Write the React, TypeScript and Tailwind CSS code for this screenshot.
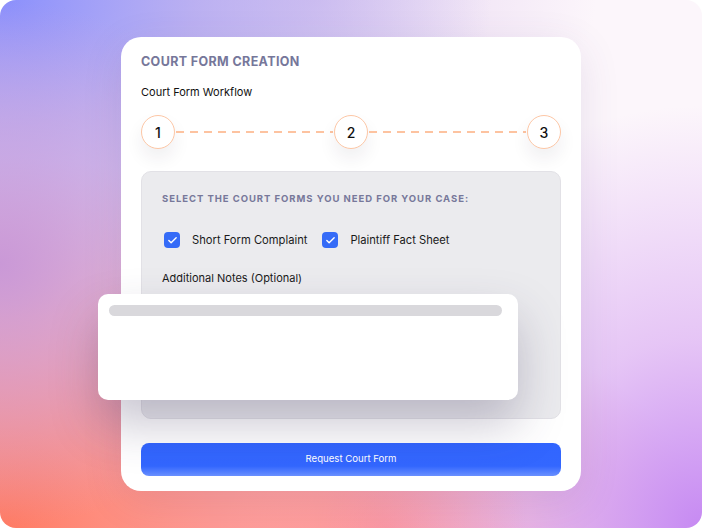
import { Check } from "lucide-react";

function Step({ n }: { n: number }) {
  return (
    <div className="w-[34px] h-[34px] shrink-0 rounded-full border border-[#fdc7a6] bg-white flex items-center justify-center text-[14px] font-medium text-[#111] shadow-[0_10px_18px_rgba(40,30,60,0.07)]">
      {n}
    </div>
  );
}

function Dashes() {
  return (
    <div className="flex-1 h-[2px] mx-[1px] bg-[repeating-linear-gradient(90deg,#fdc3a0_0_8px,transparent_8px_14px)]" />
  );
}

function CheckItem({ label }: { label: string }) {
  return (
    <label className="flex items-center gap-[12px]">
      <span className="w-[16px] h-[16px] rounded-[4px] bg-[#356bf7] flex items-center justify-center">
        <Check size={11} strokeWidth={3} className="text-white" />
      </span>
      <span className="text-[11.2px] text-[#1a1a1a]">{label}</span>
    </label>
  );
}

export default function App() {
  return (
    <div className="w-[702px] h-[528px] bg-white font-['Inter',sans-serif]">
      <div className="w-full h-full rounded-[16px] flex items-center justify-center bg-[radial-gradient(ellipse_40%_50%_at_0%_50%,rgba(200,150,215,0.95)_0%,transparent_100%),radial-gradient(ellipse_70%_60%_at_0%_0%,#8a8ffc_0%,rgba(165,155,240,0.7)_40%,transparent_100%),radial-gradient(ellipse_75%_70%_at_0%_100%,#ff7a62_0%,rgba(255,135,125,0.75)_40%,transparent_100%),radial-gradient(ellipse_55%_80%_at_100%_100%,#c689f2_0%,rgba(215,165,242,0.6)_45%,transparent_100%),radial-gradient(ellipse_45%_40%_at_55%_100%,#ffa0aa_0%,transparent_100%),radial-gradient(ellipse_40%_30%_at_45%_0%,#e6d3f0_0%,transparent_100%),linear-gradient(#fcf6fb,#fcf6fb)]">
        <div className="w-[460px] h-[454px] bg-white rounded-[20px] px-[20px] pt-[17px] pb-[15px] flex flex-col shadow-[0_10px_40px_rgba(80,60,120,0.12)]">
          <h1 className="text-[12.5px] leading-[16px] font-bold tracking-[0.03em] text-[#76779a]">
            COURT FORM CREATION
          </h1>
          <p className="mt-[14px] text-[11px] leading-[16px] text-[#111]">Court Form Workflow</p>

          <div className="mt-[15px] flex items-center">
            <Step n={1} />
            <Dashes />
            <Step n={2} />
            <Dashes />
            <Step n={3} />
          </div>

          <div className="relative mt-[22px] h-[249px] rounded-[10px] border border-[#e2e1e6] bg-[#ebebee] px-[20px] pt-[20px]">
            <h2 className="text-[9.5px] leading-[14px] font-bold tracking-[0.1em] text-[#77789a]">
              SELECT THE COURT FORMS YOU NEED FOR YOUR CASE:
            </h2>
            <div className="mt-[26px] flex items-center gap-[15px] pl-[2px]">
              <CheckItem label="Short Form Complaint" />
              <CheckItem label="Plaintiff Fact Sheet" />
            </div>
            <p className="mt-[21px] text-[11px] leading-[16px] text-[#1a1a1a]">Additional Notes (Optional)</p>

            <div className="absolute left-[-44px] top-[122px] w-[420px] h-[106px] rounded-[10px] bg-white pl-[11px] pr-[16px] pt-[11px] shadow-[0_24px_48px_rgba(60,50,90,0.28)]">
              <div className="h-[11px] rounded-full bg-[#d9d8dc]" />
            </div>
          </div>

          <button className="mt-[24px] h-[33px] rounded-[8px] bg-[linear-gradient(180deg,#3165ff_0%,#3367ff_70%,#6a90ff_100%)] text-white text-[9.6px]">
            Request Court Form
          </button>
        </div>
      </div>
    </div>
  );
}
